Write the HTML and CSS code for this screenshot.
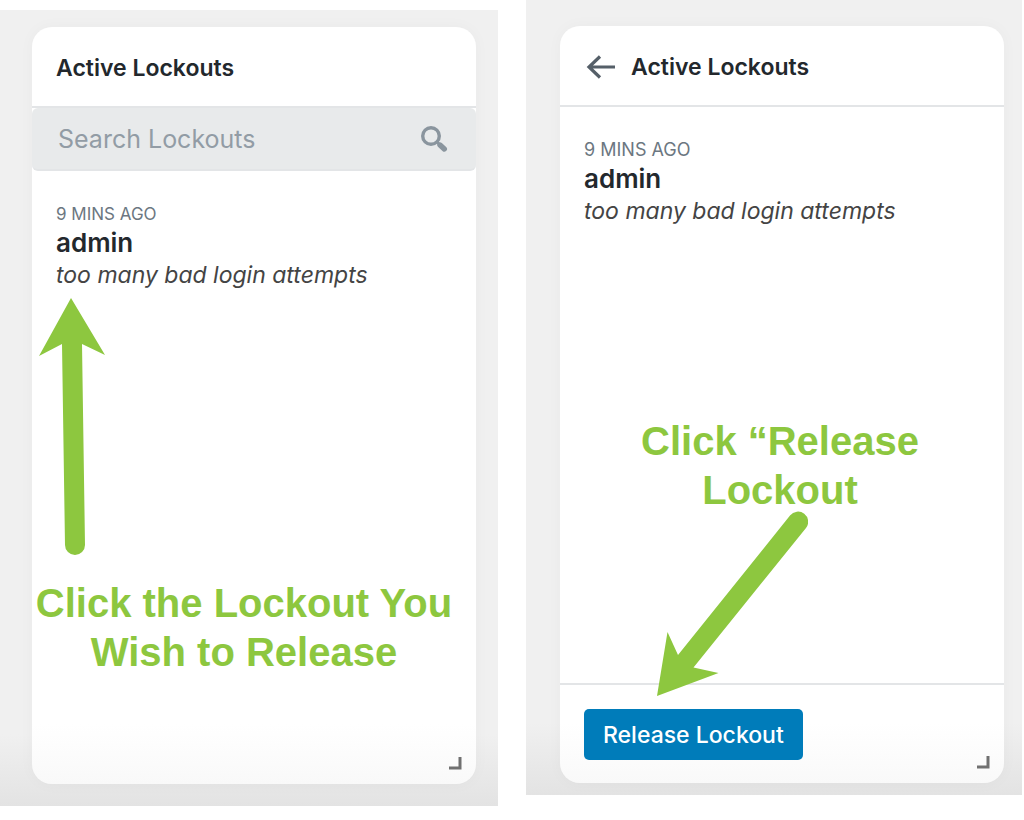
FILE: index.html
```html
<!DOCTYPE html>
<html lang="en">
<head>
<meta charset="utf-8">
<title>Active Lockouts</title>
<link rel="stylesheet" href="styles.css">
</head>
<body>
<main class="steps">
  <section class="panel panel-list">
    <article class="card">
      <header class="card-header"><h2 class="card-title">Active Lockouts</h2></header>
      <form class="search">
        <input class="search-input" type="text" placeholder="Search Lockouts" aria-label="Search Lockouts">
        <button class="icon-button" type="button" aria-label="Search">
          <svg width="28" height="28" viewBox="0 0 28 28" aria-hidden="true">
            <circle cx="11" cy="11" r="8.3" fill="none" stroke="#8a959e" stroke-width="3.4"/>
            <path d="M16.5 16.5l3 3" stroke="#8a959e" stroke-width="3"/>
            <path d="M20 20l4.300 4" stroke="#8a959e" stroke-width="5.400" stroke-linecap="round"/>
          </svg>
        </button>
      </form>
      <div class="card-body">
        <button class="lockout" type="button">
          <span class="time">9 MINS AGO</span>
          <span class="user">admin</span>
          <span class="reason">too many bad login attempts</span>
        </button>
      </div>
      <svg class="resize" width="14" height="14" viewBox="0 0 14 14" aria-hidden="true"><path d="M11 0v11H0" fill="none" stroke="#707070" stroke-width="3"/></svg>
      <svg class="arrow arrow-up" width="68" height="258" viewBox="38 298 68 258" aria-hidden="true">
        <path d="M71 298L105 355L82 344L85 545A10 10 0 0 1 65 545L62 344L39 356Z" fill="#8dc73f"/>
      </svg>
      <p class="note note-list">Click the Lockout You Wish to Release</p>
    </article>
  </section>
  <section class="panel panel-detail">
    <article class="card">
      <header class="card-header">
        <button class="icon-button back" type="button" aria-label="Back">
          <svg width="30" height="24" viewBox="0 0 30 24" aria-hidden="true"><path d="M29 12H3M14 1.500L3 12l11 10.500" fill="none" stroke="#555f68" stroke-width="3.200"/></svg>
        </button>
        <h2 class="card-title">Active Lockouts</h2>
      </header>
      <div class="card-body">
        <div class="lockout">
          <span class="time time-large">9 MINS AGO</span>
          <span class="user">admin</span>
          <span class="reason">too many bad login attempts</span>
        </div>
      </div>
      <footer class="card-footer"><button class="release" type="button">Release Lockout</button></footer>
      <svg class="resize" width="14" height="14" viewBox="0 0 14 14" aria-hidden="true"><path d="M11 0v11H0" fill="none" stroke="#707070" stroke-width="3"/></svg>
      <p class="note note-detail">Click “Release Lockout</p>
      <svg class="arrow arrow-down" width="152" height="186" viewBox="656 511 152 186" aria-hidden="true">
        <path d="M657 696L667.500 632L678 655L790 515.500A10 10 0 0 1 806 528L693.500 667.500L718.500 673Z" fill="#8dc73f"/>
      </svg>
    </article>
  </section>
</main>
</body>
</html>
```

FILE: styles.css
```css
* {
  box-sizing: border-box;
}

body {
  margin: 0;
  background: #fff;
  color: #23282d;
  font-family: Inter, "Liberation Sans", sans-serif;
}

button,
input {
  font-family: inherit;
}

.steps {
  display: grid;
  grid-template-columns: minmax(0, 498fr) minmax(0, 496fr);
  align-items: start;
  gap: 28px;
  padding-right: 2px;
}

.panel {
  background: linear-gradient(to top, #e3e3e3, #f0f0f0 72px);
}

.panel-list {
  margin-top: 10px;
  padding: 17px 22px 22px 32px;
}

.panel-detail {
  padding: 26px 18px 12px 34px;
}

.card {
  position: relative;
  display: flex;
  flex-direction: column;
  min-height: 757px;
  border-radius: 20px;
  background: linear-gradient(to top, #f9f9f9, #fff 60px);
  box-shadow: 0 0 16px rgba(0, 0, 0, 0.03);
}

.card-header {
  display: flex;
  align-items: center;
  gap: 15px;
  min-height: 81px;
  padding: 2px 24px 0;
  border-bottom: 2px solid #e3e5e7;
}

.card-title {
  margin: 0;
  font-size: 23px;
  line-height: 32px;
  font-weight: 600;
}

.icon-button {
  display: flex;
  padding: 0;
  border: 0;
  background: none;
}

.back {
  margin-left: 2px;
}

.search {
  display: flex;
  align-items: center;
  padding: 0 28px 0 26px;
  border-bottom: 2px solid #e3e5e7;
  border-radius: 6px;
  background: #e8eaeb;
}

.search-input {
  flex: 1;
  min-width: 0;
  height: 61px;
  padding: 0;
  border: 0;
  background: none;
  font-size: 25px;
}

.search-input::placeholder {
  color: #929ca5;
  opacity: 1;
}

.card-body {
  flex: 1;
  padding: 30px 24px;
}

.lockout {
  display: flex;
  flex-direction: column;
  padding: 0;
  border: 0;
  background: none;
  color: inherit;
  text-align: left;
}

.time {
  color: #6c7781;
  font-size: 17px;
  line-height: 26px;
}

.time-large {
  font-size: 18px;
}

.user {
  font-size: 26px;
  line-height: 32px;
  font-weight: 600;
}

.reason {
  color: #444;
  font-size: 23px;
  line-height: 32px;
  font-style: italic;
}

.card-footer {
  padding: 24px 24px 23px;
  border-top: 2px solid #e3e5e7;
}

.release {
  display: block;
  height: 51px;
  padding: 1px 19px 0;
  border: 0;
  border-radius: 5px;
  background: #007cba;
  color: #fff;
  font-size: 23px;
  font-weight: 500;
}

.resize {
  position: absolute;
  right: 13px;
  bottom: 13px;
}

.arrow {
  position: absolute;
}

.arrow-up {
  top: 271px;
  left: 6px;
}

.arrow-down {
  top: 485px;
  left: 96px;
}

.note {
  position: absolute;
  margin: 0;
  color: #8dc73f;
  font-family: "Liberation Sans", Arial, sans-serif;
  font-size: 40px;
  line-height: 49px;
  font-weight: 700;
  text-align: center;
}

.note-list {
  top: 552px;
  left: 0;
  width: 424px;
}

.note-detail {
  top: 391px;
  left: 70px;
  width: 300px;
}
```
